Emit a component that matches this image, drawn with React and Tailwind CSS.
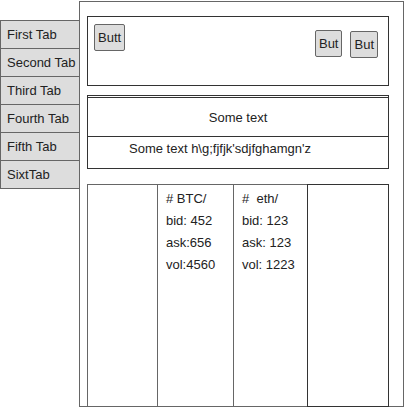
import React from "react";

const tabs = ["First Tab", "Second Tab", "Third Tab", "Fourth Tab", "Fifth Tab", "SixtTab"];

const markets = [
  null,
  ["# BTC/", "bid: 452", "ask:656", "vol:4560"],
  ["#  eth/", "bid: 123", "ask: 123", "vol: 1223"],
  null,
];

const widths = ["w-[71px]", "w-[77px]", "w-[75px]", "w-[82px]"];

const Btn = ({ label, className }) => (
  <button
    className={`h-[27px] px-[3px] bg-[#dddddd] border border-[#666] rounded-[2px] text-[13px] text-[#222] leading-none ${className || ""}`}
  >
    {label}
  </button>
);

const App = () => {
  return (
    <div
      className="flex w-[404px] h-[408px] bg-white text-[#222] overflow-hidden"
      style={{ fontFamily: '"Liberation Sans", Arial, sans-serif' }}
    >
      <div className="relative z-10 flex flex-col pt-[20px] w-[80px] shrink-0">
        {tabs.map((t, i) => (
          <div
            key={t}
            className={`h-[29px] bg-[#dddddd] border border-[#666] pl-[6px] flex items-center text-[13px] ${i > 0 ? "-mt-px" : ""}`}
          >
            {t}
          </div>
        ))}
      </div>

      <div className="-ml-px mt-px w-[325px] h-[406px] border border-[#666] pl-[7px] pt-[14px] flex flex-col shrink-0">
        <div className="w-[302px] h-[70px] border border-[#333] px-[6px] pt-[7px] flex items-start">
          <Btn label="Butt" />
          <div className="flex-1" />
          <Btn label="But" className="mt-[6px]" />
          <Btn label="But" className="mt-[7px] ml-[8px] mr-[4px]" />
        </div>

        <div className="mt-[9px] w-[302px] h-[74px] border border-double border-[#333] border-t-[3px] flex flex-col text-[13px]">
          <div className="h-[39px] border-b border-solid border-[#333] flex items-center justify-center pt-[1px]">
            Some text
          </div>
          <div className="pl-[41px] pt-[2px]">Some text h\g;fjfjk'sdjfghamgn'z</div>
        </div>

        <div className="mt-[15px] flex w-[302px] flex-1 -mb-px">
          {markets.map((m, i) => (
            <div
              key={i}
              className={`${widths[i]} h-full border ${i === 3 ? "border-[#333]" : "border-[#666]"} ${i > 0 ? "-ml-px" : ""} pl-[8px] pt-[3px] text-[13px] leading-[22px]`}
            >
              {m && m.map((line) => <div key={line} className="whitespace-pre">{line}</div>)}
            </div>
          ))}
        </div>
      </div>
    </div>
  );
};

export default App;
